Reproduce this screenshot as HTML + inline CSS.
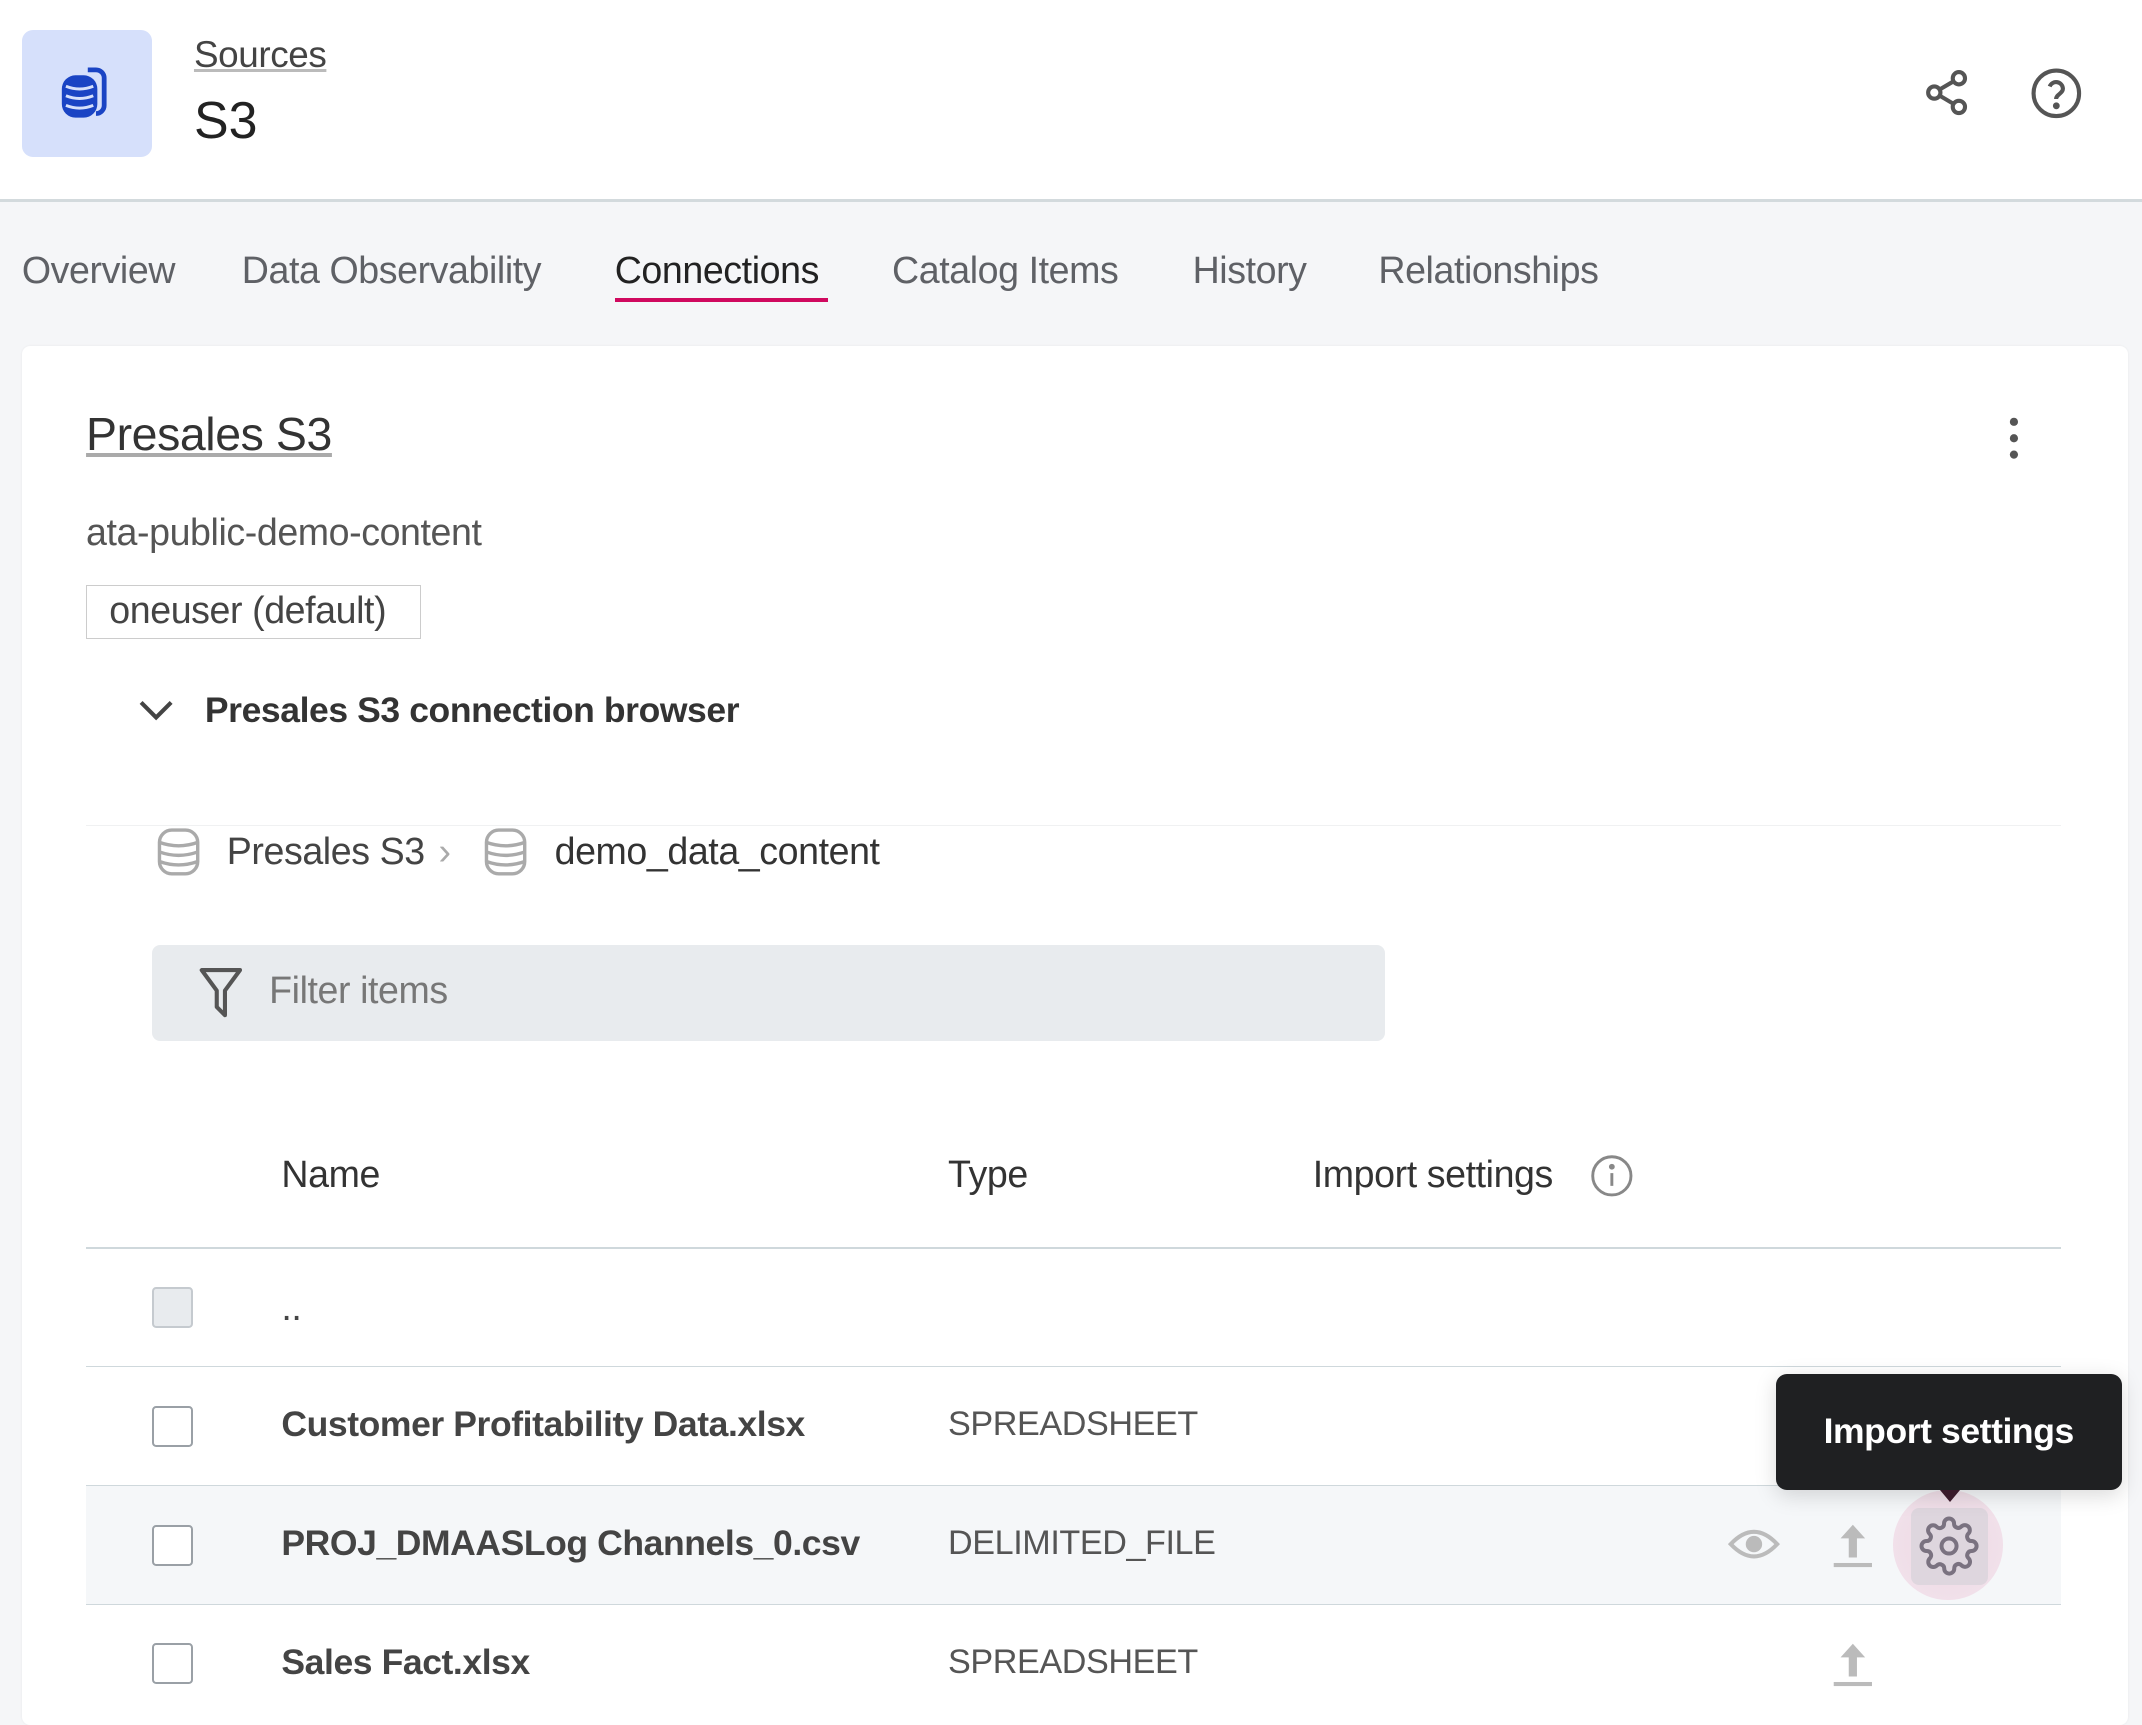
<!DOCTYPE html>
<html><head><meta charset="utf-8">
<style>
html,body{margin:0;padding:0}
body{width:1568px;height:1256px;zoom:1.36607;position:relative;overflow:hidden;background:#f5f6f8;font-family:"Liberation Sans",sans-serif;color:#333}
.a{position:absolute;white-space:nowrap}
.t{font-size:27.5px;line-height:30px;margin-top:-15px;color:#5f6166;letter-spacing:-0.3px}
.txt{font-size:27.5px;line-height:30px;margin-top:-15px;letter-spacing:-0.3px}
.line{position:absolute;left:63px;width:1446px;height:1px;background:#cfd8dc}
.cb{position:absolute;left:111px;width:30px;height:30px;border:1.5px solid #9aa0a6;border-radius:3px;background:#fff;box-sizing:border-box}
</style></head><body>
<div class="a" style="left:0;top:0;width:1568px;height:146px;background:#fff"></div>
<div class="a" style="left:0;top:146px;width:1568px;height:2px;background:#d3dadd"></div>
<div class="a" style="left:16px;top:22px;width:95px;height:93px;background:#d6e0fb;border-radius:8px"></div>
<svg class="a" style="left:40px;top:46px" width="46" height="46" viewBox="0 0 46 46">
<path d="M24 5 h6 a6 6 0 0 1 6 6 v20 a6 6 0 0 1 -6 6" fill="none" stroke="#1a44c4" stroke-width="3.5"/>
<rect x="5" y="9" width="26" height="31" rx="10" fill="#1a44c4"/>
<path d="M8 17 q10 4 20 0 M8 24 q10 4 20 0 M8 31 q10 4 20 0" stroke="#d6e0fb" stroke-width="2.2" fill="none"/>
</svg>
<div class="a" style="left:142px;top:24px;font-size:27px;line-height:32px;color:#444;text-decoration:underline;text-decoration-color:#bbb;letter-spacing:-0.3px">Sources</div>
<div class="a" style="left:142px;top:68px;font-size:38px;line-height:42px;color:#222">S3</div>
<svg class="a" style="left:1407px;top:50px" width="36" height="36" viewBox="0 0 24 24" fill="none" stroke="#555" stroke-width="2"><circle cx="18" cy="5" r="3"/><circle cx="6" cy="12" r="3"/><circle cx="18" cy="19" r="3"/><path d="M8.6 13.5l6.8 4M15.4 6.5l-6.8 4"/></svg>
<svg class="a" style="left:1485px;top:48px" width="40" height="40" viewBox="0 0 24 24" fill="none" stroke="#555" stroke-width="1.8"><circle cx="12" cy="12" r="10"/><path d="M9.1 9a3 3 0 0 1 5.8 1c0 2-3 2.5-3 4.5"/><circle cx="12" cy="17.5" r=".6" fill="#555"/></svg>

<div class="a t" style="left:16px;top:198px">Overview</div>
<div class="a t" style="left:177px;top:198px">Data Observability</div>
<div class="a t" style="left:450px;top:198px;color:#222">Connections</div>
<div class="a" style="left:450px;top:218px;width:156px;height:3px;background:#d0095f"></div>
<div class="a t" style="left:653px;top:198px">Catalog Items</div>
<div class="a t" style="left:873px;top:198px">History</div>
<div class="a t" style="left:1009px;top:198px">Relationships</div>

<div class="a" style="left:16px;top:253px;width:1542px;height:1010px;background:#fff;border-radius:6px;box-shadow:0 0 2px rgba(0,0,0,.06)"></div>
<div class="a" style="left:63px;top:298px;font-size:34px;line-height:40px;color:#333;text-decoration:underline;text-decoration-color:#aaa;letter-spacing:-0.3px">Presales S3</div>
<svg class="a" style="left:1466px;top:304px" width="16" height="36"><circle cx="8" cy="5" r="3" fill="#555"/><circle cx="8" cy="17" r="3" fill="#555"/><circle cx="8" cy="29" r="3" fill="#555"/></svg>
<div class="a txt" style="left:63px;top:390px;color:#555">ata-public-demo-content</div>
<div class="a" style="left:63px;top:428px;width:245px;height:40px;border:1px solid #ccc;box-sizing:border-box"></div>
<div class="a txt" style="left:80px;top:447px;color:#444">oneuser (default)</div>
<svg class="a" style="left:100px;top:510px" width="28" height="20" viewBox="0 0 28 20"><path d="M3 4l11 11 11-11" fill="none" stroke="#444" stroke-width="3"/></svg>
<div class="a txt" style="left:150px;top:520px;color:#333;font-weight:bold;font-size:26px">Presales S3 connection browser</div>

<div class="a" style="left:63px;top:604px;width:1446px;height:1px;background:#f0f1f2"></div>
<svg class="a" style="left:113px;top:605px" width="36" height="38" viewBox="0 0 36 38" fill="none" stroke="#aaa" stroke-width="2.5"><rect x="4" y="3" width="28" height="32" rx="9"/><path d="M4 12q14 5 28 0M4 19q14 5 28 0M4 26q14 5 28 0"/></svg>
<div class="a txt" style="left:166px;top:623px;color:#444">Presales S3</div>
<div class="a txt" style="left:321px;top:623px;color:#aaa">›</div>
<svg class="a" style="left:352px;top:605px" width="36" height="38" viewBox="0 0 36 38" fill="none" stroke="#aaa" stroke-width="2.5"><rect x="4" y="3" width="28" height="32" rx="9"/><path d="M4 12q14 5 28 0M4 19q14 5 28 0M4 26q14 5 28 0"/></svg>
<div class="a txt" style="left:406px;top:623px;color:#333">demo_data_content</div>

<div class="a" style="left:111px;top:692px;width:903px;height:70px;background:#e8ebee;border-radius:6px"></div>
<svg class="a" style="left:146px;top:707px" width="32" height="40" viewBox="0 0 32 40"><path d="M2 3h28L19 18v18l-6-6V18z" fill="none" stroke="#555" stroke-width="3" stroke-linejoin="round"/></svg>
<div class="a txt" style="left:197px;top:725px;color:#777">Filter items</div>

<div class="a txt" style="left:206px;top:860px;color:#333">Name</div>
<div class="a txt" style="left:694px;top:860px;color:#333">Type</div>
<div class="a txt" style="left:961px;top:860px;color:#333">Import settings</div>
<svg class="a" style="left:1164px;top:845px" width="32" height="32" viewBox="0 0 24 24" fill="none" stroke="#888" stroke-width="1.6"><circle cx="12" cy="12" r="10.5"/><path d="M12 10.5v7"/><circle cx="12" cy="7" r=".8" fill="#888"/></svg>
<div class="line" style="top:913px"></div>

<div class="cb" style="top:942px;background:#e8ebee;border-color:#c5cacf"></div>
<div class="a txt" style="left:206px;top:957px;color:#444">..</div>
<div class="line" style="top:1000px"></div>

<div class="cb" style="top:1029px"></div>
<div class="a txt" style="left:206px;top:1043px;color:#444;font-weight:bold;font-size:26px">Customer Profitability Data.xlsx</div>
<div class="a txt" style="left:694px;top:1043px;color:#555;font-size:25px">SPREADSHEET</div>
<div class="a" style="left:63px;top:1088px;width:1446px;height:86px;background:#f5f7f9"></div>
<div class="line" style="top:1087px"></div>
<div class="cb" style="top:1116px"></div>
<div class="a txt" style="left:206px;top:1130px;color:#444;font-weight:bold;font-size:26px">PROJ_DMAASLog Channels_0.csv</div>
<div class="a txt" style="left:694px;top:1130px;color:#555;font-size:25px">DELIMITED_FILE</div>
<svg class="a" style="left:1265px;top:1116px" width="38" height="28" viewBox="0 0 38 28"><path d="M2 14Q19-4 36 14Q19 32 2 14z" fill="none" stroke="#bbb" stroke-width="3"/><circle cx="19" cy="14" r="6" fill="#bbb"/></svg>
<svg class="a" style="left:1340px;top:1114px" width="32" height="36" viewBox="0 0 32 36" fill="#bbb"><path d="M16 2l9 10h-6v14h-6V12H7z"/><rect x="2" y="30" width="28" height="3"/></svg>
<div class="a" style="left:1386px;top:1091px;width:80px;height:80px;border-radius:50%;background:radial-gradient(circle,#ecd9e4,#f3e3ec)"></div>
<div class="a" style="left:1399px;top:1104px;width:56px;height:56px;border-radius:6px;background:#ded6de"></div>
<svg class="a" style="left:1405px;top:1110px" width="44" height="44" viewBox="0 0 24 24" fill="none" stroke="#7a7280" stroke-width="1.6"><circle cx="12" cy="12" r="3"/><path d="M19.4 15a1.650 1.65 0 0 0 .33 1.820l.06.06a2 2 0 1 1-2.830 2.830l-.06-.06a1.650 1.65 0 0 0-1.820-.33 1.650 1.65 0 0 0-1 1.510V21a2 2 0 0 1-4 0v-.09A1.650 1.65 0 0 0 9 19.4a1.650 1.65 0 0 0-1.820.33l-.06.06a2 2 0 1 1-2.830-2.830l.06-.06A1.650 1.65 0 0 0 4.680 15a1.650 1.65 0 0 0-1.510-1H3a2 2 0 0 1 0-4h.09A1.650 1.65 0 0 0 4.600 9a1.650 1.65 0 0 0-.33-1.820l-.06-.06a2 2 0 1 1 2.830-2.830l.06.06A1.650 1.65 0 0 0 9 4.680 1.650 1.65 0 0 0 10 3.170V3a2 2 0 0 1 4 0v.09a1.650 1.65 0 0 0 1 1.510 1.650 1.65 0 0 0 1.820-.33l.06-.06a2 2 0 1 1 2.830 2.830l-.06.06A1.650 1.65 0 0 0 19.4 9a1.650 1.65 0 0 0 1.510 1H21a2 2 0 0 1 0 4h-.09a1.650 1.65 0 0 0-1.510 1z"/></svg>
<div class="line" style="top:1174px"></div>
<div class="cb" style="top:1203px"></div>
<div class="a txt" style="left:206px;top:1217px;color:#444;font-weight:bold;font-size:26px">Sales Fact.xlsx</div>
<div class="a txt" style="left:694px;top:1217px;color:#555;font-size:25px">SPREADSHEET</div>
<svg class="a" style="left:1340px;top:1201px" width="32" height="36" viewBox="0 0 32 36" fill="#bbb"><path d="M16 2l9 10h-6v14h-6V12H7z"/><rect x="2" y="30" width="28" height="3"/></svg>

<div class="a" style="left:1300px;top:1006px;width:253px;height:85px;background:#1f2022;border-radius:8px;box-shadow:0 4px 16px rgba(0,0,0,.15)"></div>
<div class="a" style="left:1420px;top:1091px;width:0;height:0;border-left:8px solid transparent;border-right:8px solid transparent;border-top:9px solid #3a1a2a"></div>
<div class="a" style="left:1300px;top:1048px;width:253px;text-align:center;font-size:26px;line-height:30px;margin-top:-15px;color:#fff;font-weight:bold;letter-spacing:-0.3px">Import settings</div>
</body></html>
